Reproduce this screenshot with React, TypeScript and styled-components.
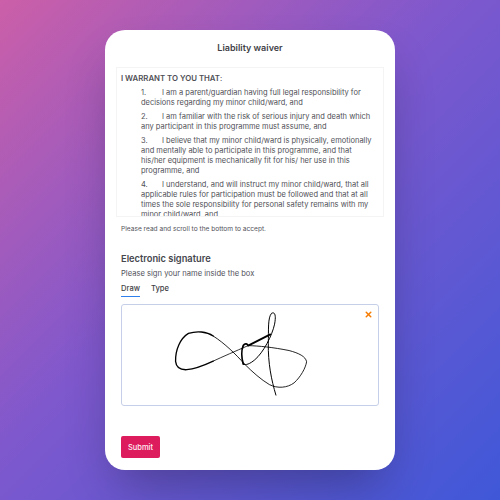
import * as React from 'react';
import styled, { createGlobalStyle } from 'styled-components';
import { X } from 'lucide-react';

const clauses = [
    {
        num: '1.',
        text: 'I am a parent/guardian having full legal responsibility for decisions regarding my minor child/ward, and',
    },
    {
        num: '2.',
        text: 'I am familiar with the risk of serious injury and death which any participant in this programme must assume, and',
    },
    {
        num: '3.',
        text: 'I believe that my minor child/ward is physically, emotionally and mentally able to participate in this programme, and that his/her equipment is mechanically fit for his/ her use in this programme, and',
    },
    {
        num: '4.',
        text: 'I understand, and will instruct my minor child/ward, that all applicable rules for participation must be followed and that at all times the sole responsibility for personal safety remains with my minor child/ward, and',
    },
];

const App = () => {
    return (
        <Page>
            <GlobalStyle />
            <Card>
                <Title>Liability waiver</Title>

                <Waiver>
                    <WaiverHeading>
                        <strong>I WARRANT TO YOU THAT</strong>:
                    </WaiverHeading>
                    <ClauseList>
                        {clauses.map((clause) => (
                            <Clause key={clause.num}>
                                <ClauseNumber>{clause.num}</ClauseNumber>
                                {clause.text}
                            </Clause>
                        ))}
                    </ClauseList>
                </Waiver>
                <Hint>Please read and scroll to the bottom to accept.</Hint>

                <SectionTitle>Electronic signature</SectionTitle>
                <SectionText>Please sign your name inside the box</SectionText>

                <Tabs>
                    <Tab $active>Draw</Tab>
                    <Tab>Type</Tab>
                </Tabs>

                <SignatureBox>
                    <ClearButton aria-label="Clear">
                        <X size={9} strokeWidth={4} color="#f57c00" />
                    </ClearButton>
                    <SignatureSvg viewBox="65 14 773 303">
                        <g fill="none" stroke="#000" strokeLinecap="round" strokeLinejoin="round">
                            <path
                                strokeWidth="3"
                                d="M530 287 C516 240 506 190 507 130 C508 90 505 52 517 39 C527 34 531 45 526 72 C518 108 492 158 466 180 C452 192 438 198 431 193"
                            />
                            <path
                                strokeWidth="5.5"
                                d="M431 193 C426 175 425 150 431 137 C437 128 444 132 446 137 L513 103"
                            />
                            <path
                                strokeWidth="2.6"
                                d="M446 137 C480 138 520 142 570 152 C600 160 620 170 623 186 C620 205 605 232 585 250 C565 265 535 268 510 255 C485 240 460 218 435 193 C410 165 375 130 340 108"
                            />
                            <path
                                strokeWidth="4"
                                d="M340 108 C320 94 290 92 265 100 C240 115 225 150 226 185 C228 205 240 211 260 210 C285 208 310 198 340 184"
                            />
                            <path strokeWidth="2.4" d="M340 184 C370 170 405 155 446 137" />
                        </g>
                    </SignatureSvg>
                </SignatureBox>

                <SubmitButton>Submit</SubmitButton>
            </Card>
        </Page>
    );
};

export default App;

const GlobalStyle = createGlobalStyle`
    html, body {
        margin: 0;
        padding: 0;
    }

    body {
        font-family: Inter, "Liberation Sans", sans-serif;
    }
`;

const Page = styled.div`
    width: 500px;
    height: 500px;
    display: flex;
    align-items: center;
    justify-content: center;
    overflow: hidden;
    background: linear-gradient(135deg, #cc5fa8 0%, #7f58cd 45%, #3f58d8 100%);
`;

const Card = styled.div`
    width: 290px;
    height: 440px;
    box-sizing: border-box;
    padding: 11px 16px 12px;
    display: flex;
    flex-direction: column;
    background-color: #ffffff;
    border-radius: 20px;
    box-shadow: 0 25px 50px -12px rgba(0, 0, 0, 0.3);
`;

const Title = styled.h2`
    margin: 0 0 13px;
    font-size: 9px;
    line-height: 13px;
    font-weight: 600;
    text-align: center;
    color: #3f3f46;
`;

const Waiver = styled.div`
    height: 150px;
    flex-shrink: 0;
    box-sizing: border-box;
    margin: 0 -5px;
    padding: 5px 5px 0 4px;
    overflow: hidden;
    border: 1px solid #f4f4f5;
    color: #4f4f56;
    font-size: 7.5px;
    line-height: 10px;
`;

const WaiverHeading = styled.p`
    margin: 0 0 5px;
    font-weight: 400;
    font-size: 7.8px;

    strong {
        font-weight: 600;
    }
`;

const ClauseList = styled.div`
    padding-left: 20px;
    display: flex;
    flex-direction: column;
    gap: 4px;
`;

const Clause = styled.p`
    margin: 0;
`;

const ClauseNumber = styled.span`
    display: inline-block;
    width: 21px;
`;

const Hint = styled.p`
    margin: 6px 0 0;
    font-size: 6.6px;
    line-height: 12px;
    color: #52525b;
`;

const SectionTitle = styled.h3`
    margin: 17px 0 0;
    font-size: 9.3px;
    line-height: 14px;
    font-weight: 600;
    color: #46464d;
`;

const SectionText = styled.p`
    margin: 2px 0 0;
    font-size: 7.6px;
    line-height: 12px;
    color: #52525b;
`;

const Tabs = styled.div`
    display: flex;
    gap: 11px;
    margin-top: 3px;
`;

const Tab = styled.div<{ $active?: boolean }>`
    padding-bottom: 1px;
    font-size: 7.6px;
    line-height: 12px;
    font-weight: 500;
    color: #3f3f46;
    border-bottom: 1px solid ${(props) => (props.$active ? '#2f80ed' : 'transparent')};
`;

const SignatureBox = styled.div`
    position: relative;
    height: 102px;
    margin-top: 7px;
    box-sizing: border-box;
    background-color: #ffffff;
    border: 1px solid #c5cfe8;
    border-radius: 3px;
`;

const ClearButton = styled.button`
    position: absolute;
    top: 5px;
    right: 5px;
    padding: 0;
    display: flex;
    background: none;
    border: none;
    cursor: pointer;
`;

const SignatureSvg = styled.svg`
    display: block;
    width: 100%;
    height: 100%;
`;

const SubmitButton = styled.button`
    margin-top: auto;
    align-self: flex-start;
    width: 39px;
    height: 22px;
    padding: 0;
    font-family: inherit;
    font-size: 7.5px;
    font-weight: 500;
    color: #ffeef4;
    background-color: #dc1c5c;
    border: none;
    border-radius: 2px;
    cursor: pointer;
`;
